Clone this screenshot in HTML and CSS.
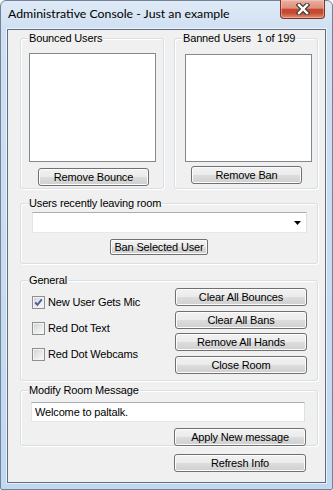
FILE: index.html
```html
<!DOCTYPE html>
<html>
<head>
<meta charset="utf-8">
<title>Administrative Console</title>
<link rel="stylesheet" href="styles.css">
</head>
<body>
<div class="window">
  <div class="titlebar">
    <span class="title">Administrative Console - Just an example</span>
    <button class="close" type="button" aria-label="Close">
      <svg width="14" height="12" viewBox="0 0 14 12">
        <path d="M3 2 L11 10 M11 2 L3 10" stroke="#3d3d3d" stroke-width="4.6" stroke-linecap="square" fill="none"/>
        <path d="M3 2 L11 10 M11 2 L3 10" stroke="#ffffff" stroke-width="2.4" stroke-linecap="square" fill="none"/>
      </svg>
    </button>
  </div>
  <div class="client">
    <div class="row-lists">
      <fieldset class="group group-half group-bounced">
        <legend>Bounced Users</legend>
        <div class="listbox"></div>
        <button class="btn btn-list" type="button">Remove Bounce</button>
      </fieldset>
      <fieldset class="group group-half group-banned">
        <legend>Banned Users &nbsp;1 of 199</legend>
        <div class="listbox"></div>
        <button class="btn btn-list" type="button">Remove Ban</button>
      </fieldset>
    </div>

    <fieldset class="group group-leaving">
      <legend>Users recently leaving room</legend>
      <div class="combo">
        <svg class="combo-arrow" width="7" height="4" viewBox="0 0 7 4"><polygon points="0,0 7,0 3.5,4" fill="#000"/></svg>
      </div>
      <button class="btn btn-small" type="button">Ban Selected User</button>
    </fieldset>

    <fieldset class="group group-general">
      <legend>General</legend>
      <div class="general-body">
        <div class="checks">
          <label class="check">
            <span class="checkbox">
              <svg width="9" height="9" viewBox="0 0 9 9"><path d="M1.2 4.3 L3.4 6.8 L7.8 1.4" stroke="#4a5e9c" stroke-width="1.9" fill="none"/></svg>
            </span>
            <span>New User Gets Mic</span>
          </label>
          <label class="check">
            <span class="checkbox"></span>
            <span>Red Dot Text</span>
          </label>
          <label class="check">
            <span class="checkbox"></span>
            <span>Red Dot Webcams</span>
          </label>
        </div>
        <div class="actions">
          <button class="btn btn-wide" type="button">Clear All Bounces</button>
          <button class="btn btn-wide" type="button">Clear All Bans</button>
          <button class="btn btn-wide" type="button">Remove All Hands</button>
          <button class="btn btn-wide" type="button">Close Room</button>
        </div>
      </div>
    </fieldset>

    <fieldset class="group group-message">
      <legend>Modify Room Message</legend>
      <div class="textbox">Welcome to paltalk.</div>
      <button class="btn btn-wide btn-apply" type="button">Apply New message</button>
    </fieldset>

    <button class="btn btn-wide btn-refresh" type="button">Refresh Info</button>
  </div>
</div>
</body>
</html>
```

FILE: styles.css
```css
html, body {
  margin: 0;
  padding: 0;
  background: #ffffff;
}

.window {
  box-sizing: border-box;
  width: 333px;
  height: 490px;
  border: 1px solid #71839a;
  border-radius: 6px 6px 2px 2px;
  background: linear-gradient(to bottom, #dfeaf6 0, #d0e0f2 28px, #c2d8ef 100%);
  display: flex;
  flex-direction: column;
  font-family: "Liberation Sans", Arial, sans-serif;
  font-size: 11px;
  letter-spacing: -0.15px;
  color: #000;
}

.titlebar {
  flex: none;
  height: 28px;
  display: flex;
  align-items: flex-start;
  padding-left: 7px;
}

.title {
  font-family: Lato, "Noto Sans", sans-serif;
  font-size: 12.3px;
  letter-spacing: 0;
  line-height: 16px;
  margin-top: 5px;
  color: #000;
}

.close {
  margin-left: auto;
  margin-right: 7px;
  margin-top: -1px;
  width: 45px;
  height: 19px;
  box-sizing: border-box;
  padding: 0;
  border: 1px solid #7b3428;
  border-top: none;
  border-radius: 0 0 4px 4px;
  background: linear-gradient(to bottom, #eab1a3 0, #dd8f7b 45%, #c8472f 52%, #c54a32 72%, #df8c6e 100%);
  box-shadow: inset 0 0 0 1px rgba(255, 210, 200, 0.45);
  display: flex;
  align-items: center;
  justify-content: center;
}

.client {
  flex: 1;
  margin: 0 6px 6px;
  border: 1px solid #5f6f82;
  background: #f0f0f0;
  padding: 2px 0 0 12px;
  display: flex;
  flex-direction: column;
  align-items: flex-start;
  box-shadow: 0 0 0 1px rgba(255, 255, 255, 0.6);
}

.row-lists {
  display: flex;
  gap: 10px;
}

.group {
  box-sizing: border-box;
  width: 298px;
  min-width: 0;
  margin: 0;
  padding: 0;
  border: 1px solid #d5dfe5;
  border-radius: 3px;
  box-shadow: inset 1px 1px 0 #ffffff, 1px 1px 0 #ffffff;
}

.group legend {
  margin-left: 7px;
  padding: 0 1px;
  line-height: 13px;
  white-space: pre;
  background: #f0f0f0;
}

.group-half {
  width: 144px;
}

.listbox {
  box-sizing: border-box;
  width: 127px;
  height: 109px;
  border: 1px solid #828790;
  background: #ffffff;
}

.btn {
  display: block;
  box-sizing: border-box;
  height: 18px;
  padding: 0;
  border: 1px solid #707070;
  border-radius: 3px;
  background: linear-gradient(to bottom, #f2f2f2 0, #ebebeb 50%, #dddddd 50%, #cfcfcf 100%);
  box-shadow: inset 0 0 0 1px #fcfcfc;
  font: inherit;
  letter-spacing: inherit;
  line-height: 16px;
  color: #000;
  text-align: center;
  white-space: nowrap;
}

.btn-list {
  width: 111px;
}

.btn-wide {
  width: 132px;
}

.btn-small {
  width: 98px;
  height: 16px;
  line-height: 14px;
  border-radius: 2px;
}

/* Bounced users */
.group-bounced {
  padding: 8px 0 2px;
}
.group-bounced .listbox {
  margin-left: 8px;
}
.group-bounced .btn-list {
  margin: 6px 0 0 17px;
}

/* Banned users */
.group-banned {
  padding: 9px 0 4px;
}
.group-banned .listbox {
  margin-left: 10px;
  height: 108px;
}
.group-banned .btn-list {
  margin: 4px 0 0 16px;
}

/* Users recently leaving */
.group-leaving {
  margin-top: 8px;
  padding: 2px 0 8px;
}

.combo {
  box-sizing: border-box;
  width: 275px;
  height: 21px;
  margin-left: 11px;
  border: 1px solid;
  border-color: #abadb3 #dbdfe6 #e3e9ef #e2e3ea;
  background: #ffffff;
  display: flex;
  align-items: center;
  justify-content: flex-end;
  padding-right: 5px;
}

.combo-arrow {
  display: block;
  margin-top: 1px;
}

.group-leaving .btn-small {
  margin: 6px 0 0 89px;
}

/* General */
.group-general {
  margin-top: 10px;
}

.general-body {
  display: flex;
  justify-content: space-between;
  padding: 1px 10px 6px 11px;
}

.checks {
  display: flex;
  flex-direction: column;
  gap: 13px;
  padding-top: 8px;
}

.check {
  display: flex;
  align-items: center;
  gap: 3px;
  height: 13px;
  line-height: 13px;
}

.checkbox {
  box-sizing: border-box;
  width: 13px;
  height: 13px;
  border: 1px solid #8e8f8f;
  background: linear-gradient(135deg, #cdd0d5 0, #e9eaec 55%, #fbfbfb 100%);
  box-shadow: inset 0 0 0 1px #f3f3f3;
  display: flex;
  align-items: center;
  justify-content: center;
}

.checkbox svg {
  display: block;
}

.actions {
  display: flex;
  flex-direction: column;
  gap: 4.667px;
}

/* Modify room message */
.group-message {
  margin-top: 3px;
  padding: 5px 0 0;
}

.textbox {
  box-sizing: border-box;
  width: 274px;
  height: 20px;
  margin-left: 10px;
  padding-left: 3px;
  border: 1px solid;
  border-color: #abadb3 #dbdfe6 #e3e9ef #e2e3ea;
  background: #ffffff;
  line-height: 18px;
}

.btn-apply {
  margin: 6px 0 -1px 153px;
}

.btn-refresh {
  margin: 8px 0 0 154px;
}
```
